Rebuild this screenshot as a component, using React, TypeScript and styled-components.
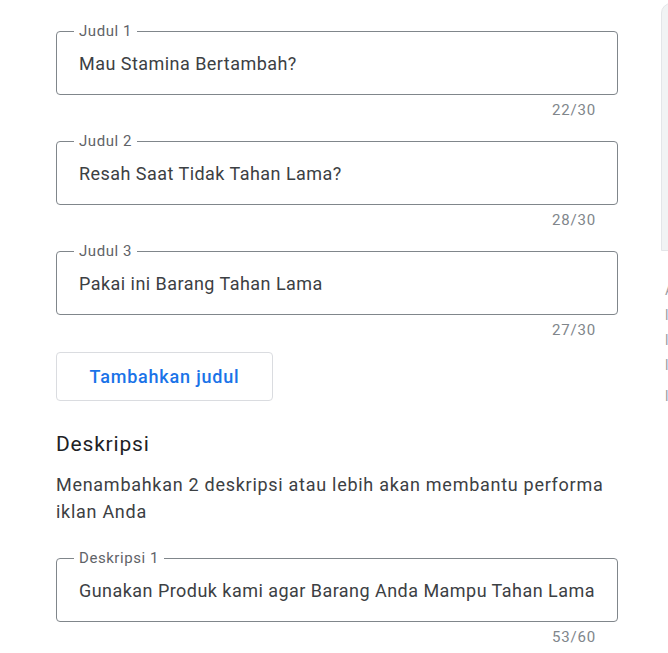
import React from "react";
import styled, { createGlobalStyle } from "styled-components";

const GlobalStyle = createGlobalStyle`
  html, body {
    margin: 0;
    padding: 0;
    background: #ffffff;
    overflow: hidden;
  }
  body {
    font-family: Roboto, "Noto Sans", Arial, sans-serif;
    -webkit-font-smoothing: antialiased;
  }
`;

const Page = styled.div`
  display: flex;
  align-items: flex-start;
  width: 668px;
  height: 653px;
  overflow: hidden;
`;

const FormColumn = styled.div`
  flex: 0 0 562px;
  padding: 22px 0 0 56px;
  display: flex;
  flex-direction: column;
`;

const FieldBlock = styled.div`
  display: flex;
  flex-direction: column;
  margin-bottom: 13px;
`;

const Outline = styled.fieldset`
  margin: 0;
  padding: 12px 22px 18px 17px;
  border: 1px solid #80868b;
  border-radius: 4px;
  min-width: 0;
`;

const Label = styled.legend`
  padding: 0 5px 0 5px;
  font-size: 15px;
  line-height: 18px;
  letter-spacing: 0.55px;
  color: #5f6368;
`;

const Value = styled.div`
  padding-left: 5px;
  font-size: 18px;
  line-height: 24px;
  letter-spacing: 0.46px;
  color: #3c4043;
  white-space: nowrap;
  overflow: hidden;
`;

const Counter = styled.div`
  align-self: flex-end;
  margin: 6px 22px 0 0;
  font-size: 15px;
  line-height: 18px;
  letter-spacing: 0.8px;
  color: #80868b;
`;

const AddButton = styled.button`
  align-self: flex-start;
  width: 217px;
  height: 49px;
  margin: 0;
  padding: 0;
  background: #ffffff;
  border: 1px solid #dadce0;
  border-radius: 4px;
  font-family: Roboto, "Noto Sans", Arial, sans-serif;
  font-size: 18px;
  font-weight: 500;
  letter-spacing: 0.8px;
  color: #1a73e8;
  cursor: pointer;
`;

const SectionTitle = styled.h2`
  margin: 29px 0 0 0;
  font-size: 21px;
  line-height: 28px;
  font-weight: 400;
  letter-spacing: 0.8px;
  color: #202124;
`;

const SectionText = styled.p`
  margin: 13px 0 24px 0;
  font-size: 18px;
  line-height: 27px;
  letter-spacing: 0.72px;
  color: #3c4043;
`;

const PreviewColumn = styled.div`
  flex: 0 0 300px;
  margin-left: 43px;
  display: flex;
  flex-direction: column;
`;

const PreviewCard = styled.div`
  height: 246px;
  margin-top: 3px;
  background: #f1f3f4;
  border: 1px solid #e3e5e8;
  border-radius: 10px 10px 0 0;
`;

const PreviewText = styled.div`
  padding: 27px 0 0 4px;
  font-size: 14px;
  line-height: 25px;
  color: #9aa0a6;
  white-space: nowrap;
`;

const PreviewLine = styled.div<{ $gap?: number }>`
  margin-top: ${(p) => p.$gap ?? 0}px;
`;

type Field = {
  label: string;
  value: string;
  max: number;
};

const headlines: Field[] = [
  { label: "Judul 1", value: "Mau Stamina Bertambah?", max: 30 },
  { label: "Judul 2", value: "Resah Saat Tidak Tahan Lama?", max: 30 },
  { label: "Judul 3", value: "Pakai ini Barang Tahan Lama", max: 30 },
];

const descriptions: Field[] = [
  {
    label: "Deskripsi 1",
    value: "Gunakan Produk kami agar Barang Anda Mampu Tahan Lama",
    max: 60,
  },
];

const TextField: React.FC<{ field: Field }> = ({ field }) => (
  <FieldBlock>
    <Outline>
      <Label>{field.label}</Label>
      <Value>{field.value}</Value>
    </Outline>
    <Counter>
      {field.value.length}/{field.max}
    </Counter>
  </FieldBlock>
);

const App: React.FC = () => {
  return (
    <>
      <GlobalStyle />
      <Page>
        <FormColumn>
          {headlines.map((field, index) => (
            <TextField key={index} field={field} />
          ))}
          <AddButton>Tambahkan judul</AddButton>
          <SectionTitle>Deskripsi</SectionTitle>
          <SectionText>
            Menambahkan 2 deskripsi atau lebih akan membantu performa iklan
            Anda
          </SectionText>
          {descriptions.map((field, index) => (
            <TextField key={index} field={field} />
          ))}
        </FormColumn>
        <PreviewColumn>
          <PreviewCard />
          <PreviewText>
            <PreviewLine>Anda</PreviewLine>
            <PreviewLine>lklan</PreviewLine>
            <PreviewLine>lklan</PreviewLine>
            <PreviewLine>lklan</PreviewLine>
            <PreviewLine $gap={6}>lklan</PreviewLine>
          </PreviewText>
        </PreviewColumn>
      </Page>
    </>
  );
};

export default App;
